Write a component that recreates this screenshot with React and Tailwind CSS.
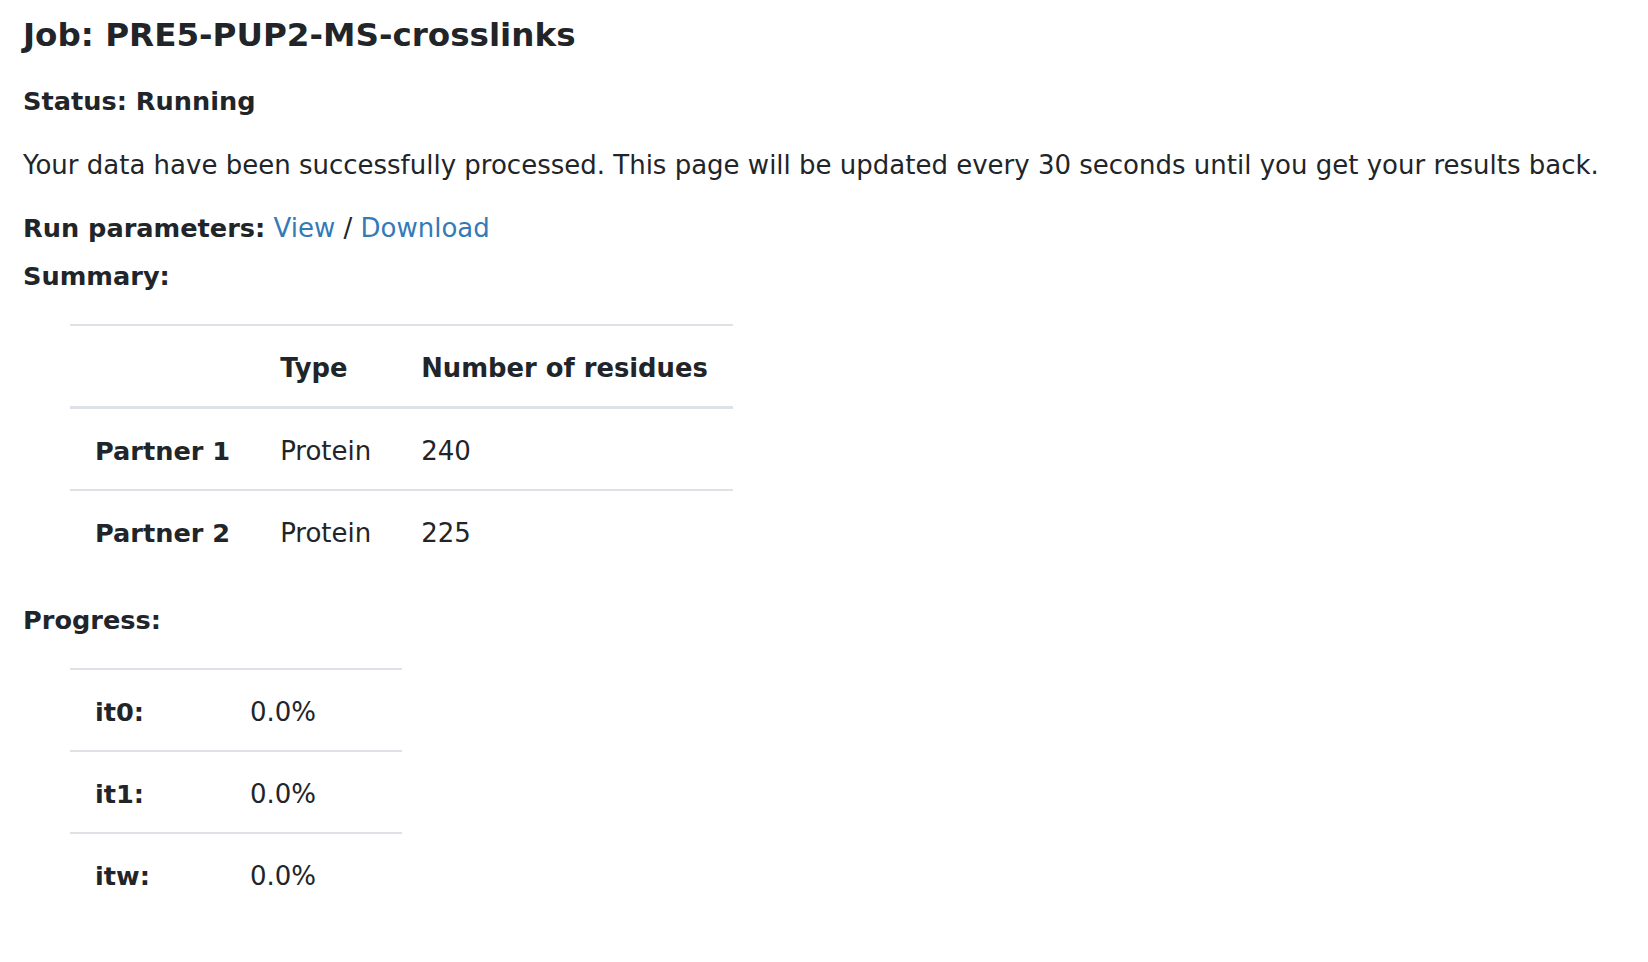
import React from 'react';

const summaryRows = [
  { partner: 'Partner 1', type: 'Protein', residues: 240 },
  { partner: 'Partner 2', type: 'Protein', residues: 225 },
];

const progressRows = [
  { label: 'it0:', value: '0.0%' },
  { label: 'it1:', value: '0.0%' },
  { label: 'itw:', value: '0.0%' },
];

export default function App() {
  return (
    <div
      className="min-h-screen bg-white px-[23px] pt-[16px] text-[#212529] text-[26px] leading-[38px]"
      style={{ fontFamily: '"DejaVu Sans", Verdana, sans-serif' }}
    >
      <h1 className="text-[32.6px] font-bold leading-[38px]">Job: PRE5-PUP2-MS-crosslinks</h1>

      <h2 className="mt-[28px] text-[25.6px] font-bold">Status: Running</h2>

      <p className="mt-[26px]">
        Your data have been successfully processed. This page will be updated every 30 seconds until you get your
        results back.
      </p>

      <p className="mt-[25px]">
        <b className="text-[25.6px]">Run parameters:</b>{' '}
        <a href="#" className="text-[#337ab7]">View</a> /{' '}
        <a href="#" className="text-[#337ab7]">Download</a>
      </p>

      <h3 className="mt-[10px] text-[25.6px] font-bold">Summary:</h3>

      {/* summary table */}
      <table className="ml-[47px] mt-[29px] border-collapse">
        <thead>
          <tr className="border-t-2 border-b-[3px] border-[#dee2e6]">
            <th className="px-[25px] pt-[23px] pb-[19px]"></th>
            <th className="px-[25px] pt-[23px] pb-[19px] text-left text-[25.8px] font-bold">Type</th>
            <th className="px-[25px] pt-[23px] pb-[19px] text-left text-[25.8px] font-bold">Number of residues</th>
          </tr>
        </thead>
        <tbody>
          {summaryRows.map((r, i) => (
            <tr key={r.partner} className={i > 0 ? 'border-t-2 border-[#dee2e6]' : ''}>
              <th className="px-[25px] pt-[23px] pb-[19px] text-left text-[25.6px] font-bold">{r.partner}</th>
              <td className="px-[25px] pt-[23px] pb-[19px]">{r.type}</td>
              <td className="px-[25px] pt-[23px] pb-[19px]">{r.residues}</td>
            </tr>
          ))}
        </tbody>
      </table>

      <h3 className="mt-[30px] text-[25.6px] font-bold">Progress:</h3>

      {/* progress table */}
      <table className="ml-[47px] mt-[29px] border-collapse">
        <tbody>
          {progressRows.map((r) => (
            <tr key={r.label} className="border-t-2 border-[#dee2e6]">
              <th className="w-[155px] px-[25px] pt-[23px] pb-[19px] text-left text-[25.6px] font-bold">{r.label}</th>
              <td className="w-[177px] px-[25px] pt-[23px] pb-[19px]">{r.value}</td>
            </tr>
          ))}
        </tbody>
      </table>
    </div>
  );
}
